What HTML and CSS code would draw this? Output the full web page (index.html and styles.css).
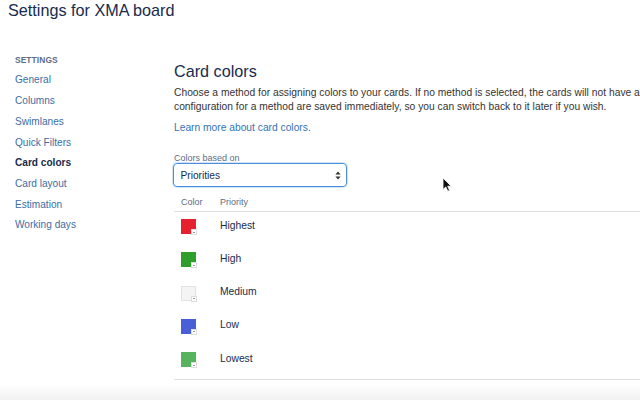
FILE: index.html
```html
<!DOCTYPE html>
<html lang="en">
<head>
<meta charset="utf-8">
<title>Settings for XMA board</title>
<link rel="stylesheet" href="styles.css">
</head>
<body>
<div class="page">
  <h1 class="page-title">Settings for XMA board</h1>
  <div class="layout">
    <nav class="sidebar">
      <div class="side-heading">SETTINGS</div>
      <a class="side-link" href="#">General</a>
      <a class="side-link" href="#">Columns</a>
      <a class="side-link" href="#">Swimlanes</a>
      <a class="side-link" href="#">Quick Filters</a>
      <a class="side-link active" href="#">Card colors</a>
      <a class="side-link" href="#">Card layout</a>
      <a class="side-link" href="#">Estimation</a>
      <a class="side-link" href="#">Working days</a>
    </nav>
    <main class="main">
      <h2 class="section-title">Card colors</h2>
      <p class="intro">Choose a method for assigning colors to your cards. If no method is selected, the cards will not have a<br>configuration for a method are saved immediately, so you can switch back to it later if you wish.</p>
      <a class="learn" href="#">Learn more about card colors.</a>
      <div class="field-label">Colors based on</div>
      <div class="select">
        <span class="select-value">Priorities</span>
        <svg class="select-arrows" width="6" height="9" viewBox="0 0 6 9"><path d="M3 0.5 L5.6 3.6 L0.4 3.6 Z M3 8.5 L5.6 5.4 L0.4 5.4 Z" fill="#333"/></svg>
      </div>
      <div class="table">
        <div class="thead">
          <span class="col-color">Color</span>
          <span class="col-name">Priority</span>
        </div>
        <div class="row">
          <span class="col-color"><span class="swatch red"><span class="swatch-btn"></span></span></span>
          <span class="col-name">Highest</span>
        </div>
        <div class="row">
          <span class="col-color"><span class="swatch green"><span class="swatch-btn"></span></span></span>
          <span class="col-name">High</span>
        </div>
        <div class="row">
          <span class="col-color"><span class="swatch grey"><span class="swatch-btn"></span></span></span>
          <span class="col-name">Medium</span>
        </div>
        <div class="row">
          <span class="col-color"><span class="swatch blue"><span class="swatch-btn"></span></span></span>
          <span class="col-name">Low</span>
        </div>
        <div class="row">
          <span class="col-color"><span class="swatch lightgreen"><span class="swatch-btn"></span></span></span>
          <span class="col-name">Lowest</span>
        </div>
      </div>
    </main>
  </div>
  <div class="footer-shade"></div>
  <svg class="cursor" width="10" height="15" viewBox="0 0 10 15"><path d="M1 1 L1 12.5 L3.8 9.9 L5.8 14.2 L7.6 13.4 L5.7 9.2 L9.2 9.2 Z" fill="#111" stroke="#fff" stroke-width="0.8" stroke-linejoin="round"/></svg>
</div>
</body>
</html>
```

FILE: styles.css
```css
* { box-sizing: border-box; }
html, body { margin: 0; padding: 0; background: #fff; }
body {
  font-family: "Liberation Sans", Arial, sans-serif;
  color: #172b4d;
  width: 640px;
  height: 400px;
  overflow: hidden;
}
.page {
  position: relative;
  height: 400px;
  display: flex;
  flex-direction: column;
}
.page-title {
  margin: 0;
  padding-left: 8px;
  font-size: 16.2px;
  line-height: 20px;
  font-weight: normal;
  color: #172b4d;
  white-space: nowrap;
}
.layout {
  display: flex;
  flex: 1;
}
.sidebar {
  width: 174px;
  flex: none;
  padding: 34px 0 0 15px;
  display: flex;
  flex-direction: column;
  align-items: flex-start;
}
.side-heading {
  font-size: 8.4px;
  line-height: 12px;
  font-weight: bold;
  color: #5e6c84;
  letter-spacing: 0.1px;
  margin-bottom: 4.4px;
}
.side-link {
  font-size: 10.1px;
  line-height: 20.7px;
  color: #3b6ea5;
  text-decoration: none;
  white-space: nowrap;
}
.side-link.active {
  color: #172b4d;
  font-weight: bold;
}
.main {
  flex: 1;
  padding-top: 41px;
  min-width: 0;
}
.section-title {
  margin: 0;
  font-size: 16.2px;
  line-height: 20px;
  font-weight: normal;
  color: #172b4d;
}
.intro {
  margin: 4.5px 0 0;
  font-size: 10.25px;
  line-height: 14px;
  letter-spacing: 0.02px;
  color: #333;
  white-space: nowrap;
}
.learn {
  display: block;
  margin-top: 7px;
  font-size: 10.25px;
  line-height: 14px;
  color: #3572b0;
  text-decoration: none;
}
.field-label {
  margin-top: 19.5px;
  font-size: 9px;
  line-height: 9px;
  color: #5e6c84;
}
.select {
  margin-top: 0;
  margin-left: -1px;
  width: 174px;
  height: 24px;
  border: 1px solid #4a8fdc;
  border-radius: 4px;
  box-shadow: 0 0 0 1px rgba(74, 143, 220, 0.25);
  display: flex;
  align-items: center;
  justify-content: space-between;
  padding: 0 5px 0 6.5px;
}
.select-value {
  font-size: 10.2px;
  color: #172b4d;
}
.select-arrows { display: block; }
.table {
  margin-top: 8px;
  width: 100%;
  border-bottom: 1px solid #dfe1e6;
}
.thead {
  display: flex;
  font-size: 9px;
  line-height: 14px;
  color: #5e6c84;
  padding-bottom: 2px;
  border-bottom: 1px solid #dfe1e6;
}
.col-color {
  width: 46px;
  padding-left: 7px;
  flex: none;
}
.col-name { white-space: nowrap; }
.row {
  display: flex;
  align-items: flex-start;
  height: 33.33px;
}
.row .col-color { padding-top: 7px; }
.row .col-name {
  margin-top: 6.5px;
  font-size: 10.3px;
  line-height: 14px;
  color: #172b4d;
}
.swatch {
  position: relative;
  display: block;
  width: 15px;
  height: 15px;
}
.swatch.red { background: #e5212f; }
.swatch.green { background: #2f9e2c; }
.swatch.grey { background: #f4f4f4; border: 1px solid #e3e3e3; }
.swatch.blue { background: #4a5ed8; }
.swatch.lightgreen { background: #57b35e; }
.swatch-btn {
  position: absolute;
  right: -1px;
  bottom: -1px;
  width: 6px;
  height: 6px;
  background: #fff;
  border: 1px solid #ddd;
}
.swatch.grey .swatch-btn { right: -2px; bottom: -2px; }
.swatch-btn::after {
  content: "";
  position: absolute;
  left: 1px;
  top: 1.5px;
  border-left: 1.2px solid transparent;
  border-right: 1.2px solid transparent;
  border-bottom: 1.5px solid #333;
}
.footer-shade {
  height: 16px;
  margin-top: auto;
  background: linear-gradient(#ffffff, #f2f2f2);
}
.cursor {
  position: absolute;
  left: 442px;
  top: 177px;
}
```
